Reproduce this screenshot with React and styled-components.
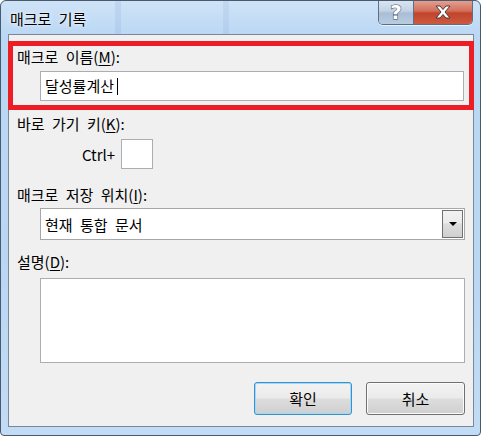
import React from 'react';
import styled, { createGlobalStyle } from 'styled-components';

const GlobalStyle = createGlobalStyle`
  html, body {
    margin: 0;
    padding: 0;
    background: #ffffff;
  }
  body {
    font-family: "Noto Sans CJK KR", "Noto Sans", sans-serif;
    font-size: 15px;
    word-spacing: 4px;
    color: #000;
  }
`;

const Window = styled.div`
  box-sizing: border-box;
  width: 481px;
  height: 436px;
  border: 1px solid #4a5a6e;
  border-radius: 6px 6px 4px 4px;
  background: linear-gradient(180deg, #cfe3f7 0%, #bad7f4 8%, #b9d6f3 60%, #c3dcf5 100%);
  display: flex;
  flex-direction: column;
  overflow: hidden;
`;

const TitleBar = styled.div`
  height: 33px;
  display: flex;
  justify-content: space-between;
  align-items: flex-start;
  padding-left: 9px;
  padding-right: 7px;
  background: linear-gradient(
    90deg,
    transparent 0 114px,
    rgba(120, 150, 200, 0.16) 114px 120px,
    transparent 120px 222px,
    rgba(120, 150, 200, 0.14) 222px 228px,
    transparent 228px
  );
`;

const Title = styled.div`
  margin-top: 7px;
  font-size: 15px;
  line-height: 22px;
  color: #000;
  text-shadow: 0 0 6px rgba(255, 255, 255, 0.9), 0 0 2px rgba(255, 255, 255, 0.9);
`;

const Controls = styled.div`
  display: flex;
  margin-top: -1px;
  border: 1px solid #5d6f85;
  border-top: none;
  border-radius: 0 0 5px 5px;
  overflow: hidden;
  box-shadow: 0 1px 0 rgba(255, 255, 255, 0.6);
`;

const CtrlButton = styled.div`
  width: ${(p) => p.$w}px;
  height: 24px;
  display: flex;
  align-items: center;
  justify-content: center;
  background: ${(p) =>
    p.$close
      ? 'linear-gradient(180deg, #e6a495 0%, #d2705c 45%, #c0442c 55%, #cd5a3f 100%)'
      : 'linear-gradient(180deg, #dbe6f2 0%, #c3d3e5 45%, #a9bdd4 55%, #b9cde2 100%)'};
  & + & {
    border-left: 1px solid #5d6f85;
  }
`;

const HelpGlyph = styled.span`
  font-family: "DejaVu Sans", sans-serif;
  font-weight: bold;
  font-size: 20px;
  line-height: 20px;
  color: #ffffff;
  -webkit-text-stroke: 1px #3e4a57;
  paint-order: stroke fill;
`;

const Client = styled.div`
  flex: 1;
  margin: 0 6px 8px 7px;
  border: 1px solid #7b8798;
  background: #f0f0f0;
  display: flex;
  flex-direction: column;
`;

const Highlight = styled.div`
  margin: 6px -1px 0 -1px;
  border: 5px solid #ee1c24;
  padding: 1px 4px 4px 4px;
  display: flex;
  flex-direction: column;
`;

const Body = styled.div`
  padding: 0 8px 0 8px;
  display: flex;
  flex-direction: column;
`;

const Label = styled.div`
  line-height: 20px;
  margin-top: ${(p) => p.$top || 0}px;
  u {
    text-decoration: underline;
    text-underline-offset: 2px;
  }
`;

const TextBox = styled.div`
  box-sizing: border-box;
  height: ${(p) => p.$h}px;
  margin-top: ${(p) => p.$top}px;
  margin-left: 23px;
  margin-right: ${(p) => p.$right || 0}px;
  border: 1px solid #abadb3;
  background: #ffffff;
  display: flex;
  align-items: center;
  padding-left: 4px;
  line-height: 20px;
`;

const Caret = styled.span`
  display: inline-block;
  width: 1px;
  height: 17px;
  background: #000;
  margin-left: 3px;
`;

const ShortcutRow = styled.div`
  display: flex;
  align-items: center;
  margin-top: 5px;
  margin-left: 65px;
  gap: 6px;
`;

const KeyBox = styled.div`
  box-sizing: border-box;
  width: 32px;
  height: 30px;
  border: 1px solid #abadb3;
  background: #fff;
`;

const Select = styled.div`
  box-sizing: border-box;
  height: 32px;
  margin-top: 3px;
  margin-left: 23px;
  border: 1px solid #a7a7a7;
  background: #fff;
  display: flex;
  align-items: stretch;
`;

const SelectText = styled.div`
  flex: 1;
  display: flex;
  align-items: center;
  padding-left: 4px;
`;

const DropButton = styled.div`
  box-sizing: border-box;
  width: 21px;
  margin: 1px;
  border: 1px solid #707070;
  background: linear-gradient(180deg, #f2f2f2 0%, #ebebeb 45%, #dddddd 50%, #cfcfcf 100%);
  display: flex;
  align-items: center;
  justify-content: center;
`;

const Arrow = styled.div`
  width: 0;
  height: 0;
  border-left: 4px solid transparent;
  border-right: 4px solid transparent;
  border-top: 4px solid #000;
`;

const ButtonRow = styled.div`
  display: flex;
  justify-content: flex-end;
  gap: 14px;
  margin-top: 19px;
`;

const Button = styled.div`
  box-sizing: border-box;
  width: ${(p) => p.$w}px;
  height: 33px;
  border: 1px solid ${(p) => (p.$default ? '#3c8fc9' : '#707070')};
  border-radius: 3px;
  background: linear-gradient(180deg, #f2f2f2 0%, #ebebeb 48%, #dddddd 52%, #cfcfcf 100%);
  box-shadow: ${(p) =>
    p.$default ? 'inset 0 0 0 1px #9bdcf8' : 'inset 0 0 0 1px #fbfbfb'};
  display: flex;
  align-items: center;
  justify-content: center;
  line-height: 20px;
`;

export default function App() {
  return (
    <>
      <GlobalStyle />
      <Window>
        <TitleBar>
          <Title>매크로 기록</Title>
          <Controls>
            <CtrlButton $w={34}>
              <HelpGlyph>?</HelpGlyph>
            </CtrlButton>
            <CtrlButton $w={58} $close>
              <svg width="18" height="14" viewBox="0 0 18 14">
                <path
                  d="M2 1 H6 L9 4.5 L12 1 H16 L11 7 L16 13 H12 L9 9.5 L6 13 H2 L7 7 Z"
                  fill="#ffffff"
                  stroke="#4a3a3a"
                  strokeWidth="1"
                  strokeLinejoin="round"
                />
              </svg>
            </CtrlButton>
          </Controls>
        </TitleBar>

        <Client>
          <Highlight>
            <Label>
              매크로 이름(<u>M</u>):
            </Label>
            <TextBox $h={30} $top={4} $right={1}>
              달성률계산
              <Caret />
            </TextBox>
          </Highlight>

          <Body>
            <Label $top={4}>
              바로 가기 키(<u>K</u>):
            </Label>
            <ShortcutRow>
              <span>Ctrl+</span>
              <KeyBox />
            </ShortcutRow>

            <Label $top={16}>
              매크로 저장 위치(<u>I</u>):
            </Label>
            <Select>
              <SelectText>현재 통합 문서</SelectText>
              <DropButton>
                <Arrow />
              </DropButton>
            </Select>

            <Label $top={12}>
              설명(<u>D</u>):
            </Label>
            <TextBox $h={85} $top={6} />

            <ButtonRow>
              <Button $w={98} $default>
                확인
              </Button>
              <Button $w={99}>취소</Button>
            </ButtonRow>
          </Body>
        </Client>
      </Window>
    </>
  );
}
